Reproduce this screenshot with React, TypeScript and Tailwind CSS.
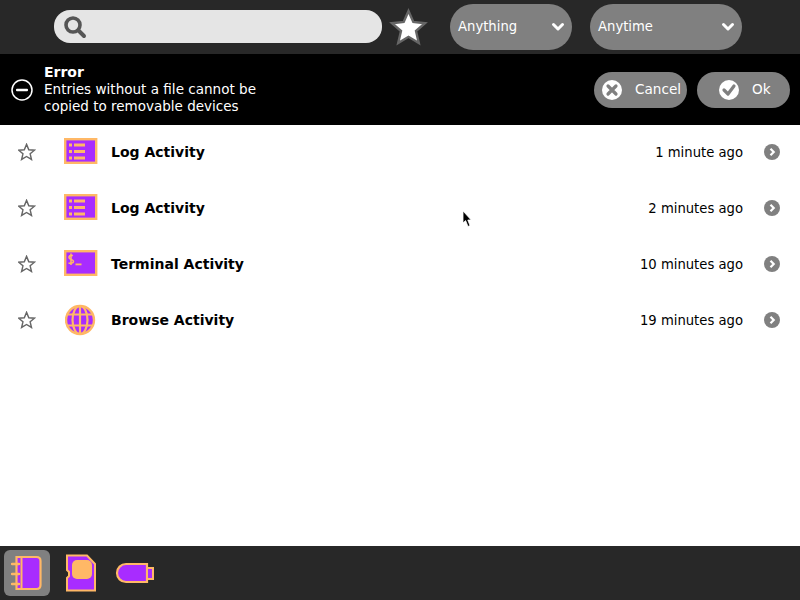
import { ReactNode } from 'react';

const ORANGE = '#ffb866';
const PURPLE = '#a82cff';

function ToolbarStar() {
  return (
    <svg width="40" height="38" viewBox="0 0 40 38" className="ml-[7px] shrink-0">
      <path
        d="M19.5 3 L24.3 14 L36 15.2 L27 23 L29.8 35 L19.5 28.8 L9.2 35 L12 23 L3 15.2 L14.7 14 Z"
        fill="#fff"
        stroke="#666"
        strokeWidth="2.4"
      />
    </svg>
  );
}

function Chevron() {
  return (
    <svg width="14" height="10" viewBox="0 0 14 10">
      <path d="M2.5 2.5 L7 7 L11.5 2.5" fill="none" stroke="#fff" strokeWidth="3" strokeLinecap="round" strokeLinejoin="round" />
    </svg>
  );
}

function Select({ label, className }: { label: string; className: string }) {
  return (
    <div className={`flex h-[46px] items-center justify-between rounded-[23px] bg-[#808080] pl-2 pr-[7px] text-[13.2px] text-white ${className}`}>
      <span className="-mt-px">{label}</span>
      <Chevron />
    </div>
  );
}

function ActionButton({ icon, label, className }: { icon: ReactNode; label: string; className: string }) {
  return (
    <div className={`flex h-9 w-[93px] items-center rounded-[18px] bg-[#808080] text-[13.6px] text-white ${className}`}>
      {icon}
      <span className="-mt-px">{label}</span>
    </div>
  );
}

function FavStar() {
  return (
    <svg width="18" height="18" viewBox="0 0 20 20" className="ml-[18px] shrink-0">
      <path
        d="M9.5 1.5 L12 7.5 L18.3 8 L13.5 12 L15 18.3 L9.5 15 L4 18.3 L5.5 12 L0.8 8 L7 7.5 Z"
        fill="none"
        stroke="#666"
        strokeWidth="1.6"
      />
    </svg>
  );
}

function LogIcon() {
  return (
    <svg width="34" height="26" viewBox="0 0 34 26" className="-mt-[2px]">
      <rect x="1.2" y="1.2" width="31" height="23.6" fill={PURPLE} stroke={ORANGE} strokeWidth="2.4" />
      <g fill={ORANGE}>
        <rect x="5" y="5.5" width="3" height="3" />
        <rect x="5" y="12" width="3" height="3" />
        <rect x="5" y="18.5" width="3" height="3" />
        <rect x="10" y="5.5" width="11" height="3" />
        <rect x="10" y="12" width="11" height="3" />
        <rect x="10" y="18.5" width="11" height="3" />
      </g>
    </svg>
  );
}

function TerminalIcon() {
  return (
    <svg width="34" height="26" viewBox="0 0 34 26" className="-mt-[2px]">
      <rect x="1.2" y="1.2" width="31" height="23.6" fill={PURPLE} stroke={ORANGE} strokeWidth="2.4" />
      <path d="M9 5.5 C6 5 5 6 5 7.5 C5 10 9.5 9 9.5 11.5 C9.5 13 7 13.5 4.5 13 M7 3.5 V15" fill="none" stroke={ORANGE} strokeWidth="1.6" />
      <rect x="11.5" y="13.5" width="6" height="1.8" fill={ORANGE} />
    </svg>
  );
}

function BrowseIcon() {
  return (
    <svg width="32" height="32" viewBox="0 0 32 32">
      <circle cx="15" cy="16" r="14" fill={PURPLE} stroke={ORANGE} strokeWidth="2.4" />
      <g fill="none" stroke={ORANGE} strokeWidth="2.2">
        <path d="M15 2 V30" />
        <ellipse cx="15" cy="16" rx="7.5" ry="14" />
        <path d="M2.5 10.5 H27.5 M2.5 21.5 H27.5" />
      </g>
    </svg>
  );
}

const entries = [
  { title: 'Log Activity', time: '1 minute ago', icon: <LogIcon /> },
  { title: 'Log Activity', time: '2 minutes ago', icon: <LogIcon /> },
  { title: 'Terminal Activity', time: '10 minutes ago', icon: <TerminalIcon /> },
  { title: 'Browse Activity', time: '19 minutes ago', icon: <BrowseIcon /> },
];

export default function App() {
  return (
    <div className="relative flex h-[600px] w-[800px] flex-col overflow-hidden bg-white font-['DejaVu_Sans',sans-serif] text-[14px] text-black">
      <header className="flex h-[54px] shrink-0 items-center bg-[#282828] pl-[54px]">
        <div className="mb-px flex h-[33px] w-[328px] items-center rounded-[16px] bg-[#e5e5e5] pl-[9px]">
          <svg width="24" height="24" viewBox="0 0 24 24">
            <circle cx="10" cy="10" r="7" fill="none" stroke="#555" strokeWidth="3.6" />
            <path d="M15.5 15.5 L21 21" stroke="#555" strokeWidth="4" strokeLinecap="round" />
          </svg>
        </div>
        <ToolbarStar />
        <Select label="Anything" className="ml-[21px] w-[122px]" />
        <Select label="Anytime" className="ml-[18px] w-[152px]" />
      </header>

      <section className="flex h-[71px] shrink-0 items-center bg-black pl-[11px] pr-[10px] text-white">
        <svg width="22" height="22" viewBox="0 0 22 22" className="shrink-0">
          <circle cx="11" cy="11" r="10" fill="none" stroke="#fff" strokeWidth="1.5" />
          <rect x="5" y="9.8" width="12" height="2.4" rx="1" fill="#fff" />
        </svg>
        <div className="ml-[11px] flex-1 leading-[17px]">
          <div className="font-bold">Error</div>
          <div className="text-[13.55px]">Entries without a file cannot be</div>
          <div className="text-[13.5px]">copied to removable devices</div>
        </div>
        <ActionButton
          className="pl-2"
          label="Cancel"
          icon={
            <svg width="20" height="20" viewBox="0 0 20 20" className="mr-[13px] shrink-0">
              <circle cx="10" cy="10" r="10" fill="#fff" />
              <path d="M6 6 L14 14 M14 6 L6 14" stroke="#808080" strokeWidth="3.2" strokeLinecap="round" />
            </svg>
          }
        />
        <ActionButton
          className="ml-[10px] pl-[22px]"
          label="Ok"
          icon={
            <svg width="20" height="20" viewBox="0 0 20 20" className="mr-[13px] shrink-0">
              <circle cx="10" cy="10" r="10" fill="#fff" />
              <path d="M5 10 L9 14 L15 6" fill="none" stroke="#808080" strokeWidth="3.2" strokeLinecap="round" strokeLinejoin="round" />
            </svg>
          }
        />
      </section>

      <main className="-mt-px flex-1">
        {entries.map((entry, i) => (
          <div key={i} className="flex h-14 items-center">
            <FavStar />
            <div className="ml-[28px] flex w-[34px] shrink-0 justify-center">{entry.icon}</div>
            <div className="ml-[13px] flex-1 font-bold">{entry.title}</div>
            <div className="mt-px text-[13.2px]">{entry.time}</div>
            <svg width="16" height="16" viewBox="0 0 16 16" className="ml-[21px] mr-5 shrink-0">
              <circle cx="8" cy="8" r="8" fill="#808080" />
              <path d="M6.5 4.8 L9.7 8 L6.5 11.2" fill="none" stroke="#fff" strokeWidth="2.2" />
            </svg>
          </div>
        ))}
      </main>

      <footer className="flex h-[54px] shrink-0 items-center bg-[#282828] pl-1">
        <div className="flex h-[46px] w-[46px] items-center justify-center rounded-md bg-[#808080]">
          <svg width="32" height="36" viewBox="0 0 32 36">
            <path d="M5.5 2 H25.5 Q29.5 2 29.5 6 V30 Q29.5 34 25.5 34 H5.5 Z" fill={PURPLE} stroke={ORANGE} strokeWidth="2.2" />
            <path d="M10.5 2 V34" stroke={ORANGE} strokeWidth="2" />
            <path d="M1 9 H8 M1 19 H8 M1 29 H8" stroke={ORANGE} strokeWidth="2.4" strokeLinecap="round" />
          </svg>
        </div>
        <svg width="32" height="38" viewBox="0 0 32 38" className="ml-[15px]">
          <path d="M2 1.5 H22 L30 10 V36.5 H2 V24 L4 22 V18 L2 16 Z" fill={PURPLE} stroke={ORANGE} strokeWidth="2" />
          <rect x="7" y="6" width="20" height="19" rx="5" fill={ORANGE} />
        </svg>
        <svg width="40" height="22" viewBox="0 0 40 22" className="ml-[18px]">
          <path d="M11 2 H32 V20 H11 A9 9 0 0 1 11 2 Z" fill={PURPLE} stroke={ORANGE} strokeWidth="2.2" />
          <rect x="32" y="6" width="6" height="11" fill={PURPLE} stroke={ORANGE} strokeWidth="2" />
        </svg>
      </footer>

      {/* mouse pointer */}
      <svg width="12" height="18" viewBox="0 0 12 18" className="absolute left-[462px] top-[210px]">
        <path d="M1 1 V13 L3.6 10.6 L6 16.5 L8 15.6 L5.8 10 L9.2 10 Z" fill="#000" stroke="#fff" strokeWidth="0.8" />
      </svg>
    </div>
  );
}
